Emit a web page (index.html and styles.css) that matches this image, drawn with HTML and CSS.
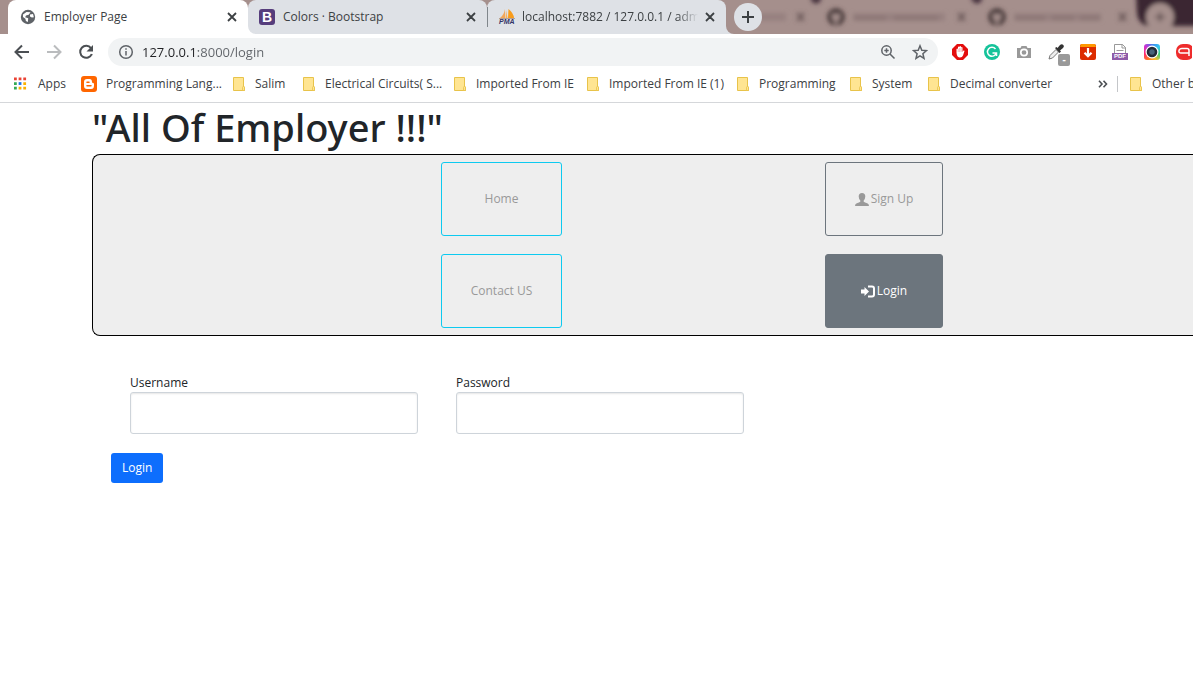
FILE: index.html
```html
<!DOCTYPE html>
<html lang="en">
<head>
<meta charset="utf-8">
<title>Employer Page</title>
<link rel="stylesheet" href="styles.css">
</head>
<body>
<svg class="defs" aria-hidden="true">
  <symbol id="close" viewBox="0 0 10 10"><path d="M1 1l8 8M9 1L1 9" stroke="currentColor" stroke-width="1.8" fill="none"/></symbol>
  <symbol id="folder" viewBox="0 0 13 14"><path d="M.5.5h10v9.5h1v3.500h-11z" fill="#ffe592" stroke="#e8c34a"/><path d="M9.500 13.500V10.500q0-1 1-1t1 1v3z" fill="#ffe592" stroke="#e8c34a" stroke-width=".8"/></symbol>
  <symbol id="github" viewBox="0 0 16 16"><circle cx="8" cy="8" r="8" fill="#4f4041"/><path d="M4.500 4.500l2 1h3l2-1v3.500q0 3-2.500 3v4H7v-4Q4.500 11 4.500 8z" fill="#a58f8c"/></symbol>
</svg>

<header class="browser">
  <div class="tabstrip">
    <div class="tab active">
      <svg class="favicon" viewBox="0 0 16 16"><circle cx="8" cy="8" r="7.200" fill="#5f6368"/><path d="M3 5.500L6.500 3l4 .2-1.800 2.600L6 6.500l-.8 1.800 3 .9-.3 3.800-2-1-.5-2.300L3 8z" fill="#fff"/><path d="M10 5.500l3-.6.8 3.300-2 .4-1.800-1z" fill="#fff"/></svg>
      <span class="tab-title">Employer Page</span>
      <button class="tab-close" aria-label="Close tab"><svg><use href="#close"/></svg></button>
    </div>
    <div class="tab">
      <span class="favicon bootstrap">B</span>
      <span class="tab-title">Colors · Bootstrap</span>
      <button class="tab-close" aria-label="Close tab"><svg><use href="#close"/></svg></button>
    </div>
    <div class="tab divided">
      <span class="favicon pma"><svg viewBox="0 0 16 10"><path d="M6 0v9H1q4-3 5-9z" fill="#f2a65a"/><path d="M9.500 0q5 4 5.500 9H9z" fill="#f89c1c"/><path d="M7 1l1.500 8H6.500z" fill="#f6b15e"/><path d="M0 9.500h16" stroke="#b8a090"/></svg><b>PMA</b></span>
      <span class="tab-title fade">localhost:7882 / 127.0.0.1 / admin</span>
      <button class="tab-close" aria-label="Close tab"><svg><use href="#close"/></svg></button>
    </div>
    <div class="strip-end">
      <button class="new-tab" aria-label="New tab"><svg viewBox="0 0 12 12"><path d="M6 0v12M0 6h12" stroke="#3c4043" stroke-width="2"/></svg></button>
      <svg class="backdrop" viewBox="0 0 467 34" preserveAspectRatio="xMinYMin slice" aria-hidden="true">
        <defs><filter id="soft" x="-10%" y="-50%" width="120%" height="200%"><feGaussianBlur stdDeviation="2"/></filter></defs>
        <rect width="467" height="34" fill="#a58f8c"/>
        <g filter="url(#soft)">
          <path d="M84-4h12l-2 6q-4 3-8 0zM244-4h13l-2 6q-4 3-8 0z" fill="#49343f"/>
          <path d="M410-6h70v32h-55q-12 0-14-12z" fill="#3b2833"/>
          <circle cx="434" cy="17" r="14" fill="#a58f8c"/>
          <path d="M434 12v10M429 17h10M71 13l7 8M78 13l-7 8M232 13l7 8M239 13l-7 8M393 13l7 8M400 13l-7 8" stroke="#6b5858" stroke-width="2.500"/>
          <path d="M20 17h40M127 17h92M288 17h87" stroke="#978180" stroke-width="8"/>
          <path d="M128 18h32M168 18h44M289 18h30M326 18h22M354 18h20" stroke="#8b7674" stroke-width="4"/>
        </g>
        <g filter="url(#soft)"><use href="#github" x="101" y="8" width="18" height="18"/><use href="#github" x="262" y="8" width="18" height="18"/></g>
      </svg>
    </div>
  </div>

  <div class="toolbar">
    <div class="nav-icons">
      <button aria-label="Back"><svg viewBox="0 0 16 16" fill="none" stroke="#4b4f53" stroke-width="2"><path d="M15 8H2M8 1.500L1.500 8 8 14.500"/></svg></button>
      <button aria-label="Forward"><svg viewBox="0 0 16 16" fill="none" stroke="#babcbe" stroke-width="2"><path d="M1 8h13M8 1.500L14.500 8 8 14.500"/></svg></button>
      <button aria-label="Reload"><svg viewBox="0 0 16 16"><path d="M13 4.200A6 6 0 1 0 13.800 10" fill="none" stroke="#4b4f53" stroke-width="2"/><path d="M15 1v6.500H8.500z" fill="#4b4f53"/></svg></button>
    </div>
    <div class="omnibox">
      <svg viewBox="0 0 16 16" fill="none" stroke="#5f6368" stroke-width="1.500"><circle cx="8" cy="8" r="6.300"/><path d="M8 7v4.500M8 4.200v1.600"/></svg>
      <input class="url" type="text" aria-label="Address" value="127.0.0.1:8000/login">
      <button aria-label="Zoom"><svg viewBox="0 0 16 16" fill="none" stroke="#5f6368" stroke-width="1.500"><circle cx="6.500" cy="6.500" r="4.700"/><path d="M10 10l4.500 4.500M6.500 4.300v4.400M4.300 6.500h4.400"/></svg></button>
      <button aria-label="Bookmark"><svg viewBox="0 0 16 16" fill="none" stroke="#5f6368" stroke-width="1.500"><path d="M8 1.800l1.800 4.400 4.700.4-3.600 3.100 1.100 4.600L8 11.800l-4 2.500 1.100-4.600L1.500 6.600l4.700-.4z"/></svg></button>
    </div>
    <div class="extensions">
      <svg viewBox="0 0 16 16"><path d="M5 0h6l5 5v6l-5 5H5l-5-5V5z" fill="#e40d0d"/><path d="M4.500 9V5q.8-.8 1.500 0V3q.7-.9 1.500 0V2.500q.7-.9 1.500 0V3.500q.8-.8 1.500 0V8l1-1.500q1-.4 1 .5L11 11.500q-.7 2-3 2-3 0-3.500-4.500z" fill="#fff"/><path d="M6.200 5v3M7.700 4v4M9.200 4v4" stroke="#e40d0d" stroke-width=".3"/></svg>
      <svg viewBox="0 0 16 16"><circle cx="8" cy="8" r="8" fill="#15c39a"/><path d="M11.500 5A4.500 4.500 0 1 0 12.300 9M8.500 9h4v3" fill="none" stroke="#fff" stroke-width="1.500"/></svg>
      <svg viewBox="0 0 16 16"><path d="M1 4h3.500l1-2h5l1 2H15v10H1z" fill="#999"/><circle cx="8" cy="8.500" r="3.200" fill="none" stroke="#fff" stroke-width="1.700"/></svg>
      <span class="picker"><svg viewBox="0 0 16 16"><path d="M1 15l1-3.500 6-6L10.500 8l-6 6z" fill="#eee" stroke="#777"/><path d="M7 4l1.500-1 1 1L12 1q2-1.500 3.300 0T15 4l-3 2.500 1 1L11.500 9z" fill="#333"/></svg><b>-</b></span>
      <svg viewBox="0 0 16 16"><rect width="16" height="16" rx="2" fill="#dd2c00"/><path d="M1 0h14l1 3H0z" fill="#ff9800"/><path d="M8 4v8M4.500 8.800L8 12.300l3.500-3.500" stroke="#fff" stroke-width="2.200" fill="none"/></svg>
      <span class="pdf"><svg viewBox="0 0 14 9"><path d="M1.500 9V.5h8l3 3V9" fill="#fff" stroke="#999"/><path d="M9 0v4h4M3.500 6.500h7" fill="none" stroke="#999"/></svg><b>PDF</b></span>
      <span class="lens"><svg viewBox="0 0 16 16"><circle cx="8" cy="8" r="6.500" fill="#fff"/><circle cx="8" cy="8" r="5.300" fill="#222b38"/><circle cx="8" cy="8" r="2.700" fill="#47637a"/></svg></span>
      <svg viewBox="0 0 16 16"><rect width="18" height="16" rx="7" fill="#ee2c2c"/><path d="M13 9H5q-2.500 0-2-2.500Q3.500 4.500 6 4.500h5q2 0 2 2V12" fill="none" stroke="#fff" stroke-width="1.500"/></svg>
    </div>
  </div>

  <nav class="bookmarks" aria-label="Bookmarks">
    <a href="#"><svg viewBox="0 0 14 14"><path d="M0 0h3v3H0zM5 0h3v3H5zM10 0h3v3h-3z" fill="#ea4335"/><path d="M0 5h3v3H0zM0 10h3v3H0z" fill="#34a853"/><path d="M5 5h3v3H5z" fill="#1a73e8"/><path d="M10 5h3v3h-3zM5 10h3v3H5zM10 10h3v3h-3z" fill="#fbb100"/></svg>Apps</a>
    <a href="#"><svg class="blogger" viewBox="0 0 16 16"><rect width="16" height="16" rx="3" fill="#f60"/><path d="M6 3h2.500Q11 3 11 6q0 1 1 1t1 1v2q0 3-3 3H6q-3 0-3-3V6q0-3 3-3z" fill="#fff"/><path d="M6 6.200h2M6 9.800h4" stroke="#f60" stroke-width="1.500" stroke-linecap="round"/></svg>Programming Lang...</a>
    <a href="#"><svg><use href="#folder"/></svg>Salim</a>
    <a href="#"><svg><use href="#folder"/></svg>Electrical Circuits( S...</a>
    <a href="#"><svg><use href="#folder"/></svg>Imported From IE</a>
    <a href="#"><svg><use href="#folder"/></svg>Imported From IE (1)</a>
    <a href="#"><svg><use href="#folder"/></svg>Programming</a>
    <a href="#"><svg><use href="#folder"/></svg>System</a>
    <a href="#"><svg><use href="#folder"/></svg>Decimal converter</a>
    <button class="more" aria-label="More bookmarks"><svg viewBox="0 0 10 8"><path d="M1 .8L4 4 1 7.200M5.500.8l3 3.200-3 3.200" fill="none" stroke="#4b4f53" stroke-width="1.600"/></svg></button>
    <a class="other" href="#"><svg><use href="#folder"/></svg>Other bookmarks</a>
  </nav>
</header>

<main class="page">
  <h1>"All Of Employer !!!"</h1>
  <nav class="panel" aria-label="Main">
    <a class="card home" href="#">Home</a>
    <a class="card account" href="#"><svg viewBox="0 0 14 13"><path d="M7 0q3.300 0 3.300 3.500Q10.200 6 8.700 7.500v1.300q1 .8 3.500 1.400Q14 10.700 14 13H0q0-2.300 1.800-2.800 2.500-.6 3.500-1.400V7.500Q3.800 6 3.700 3.500 3.700 0 7 0z" fill="currentColor"/></svg>Sign Up</a>
    <a class="card home" href="#">Contact US</a>
    <a class="card account current" href="#"><svg viewBox="0 0 14 12"><path d="M0 4h3.500V1.500L8 6l-4.500 4.500V8H0z" fill="currentColor"/><path d="M7 1h4q2 0 2 2v6q0 2-2 2H7" fill="none" stroke="currentColor" stroke-width="2"/></svg>Login</a>
  </nav>
  <form class="login">
    <div class="fields">
      <div class="field"><label for="username">Username</label><input id="username" type="text"></div>
      <div class="field"><label for="password">Password</label><input id="password" type="password"></div>
    </div>
    <button class="submit" type="button">Login</button>
  </form>
</main>
</body>
</html>
```
FILE: styles.css
```css
* { box-sizing: border-box; }
body {
  margin: 0;
  background: #fff;
  color: #212529;
  font: 12px/18px "Open Sans", "Noto Sans", sans-serif;
  overflow-x: hidden;
}
button { padding: 0; border: 0; background: none; font: inherit; color: inherit; }
a { color: inherit; text-decoration: none; }
svg { display: block; flex: none; }
.defs { position: absolute; width: 0; height: 0; }

.browser { border-bottom: 1px solid #d5d7da; color: #3c4043; overflow: hidden; }
.tabstrip {
  display: flex;
  height: 34px;
  border-left: 8px solid #a58f8c;
  background: linear-gradient(#a58f8c 50%, #fff 50%);
}
.tab {
  flex: none;
  display: flex;
  align-items: center;
  gap: 8px;
  width: 239px;
  padding: 0 11px;
  border-radius: 8px 8px 0 0;
  background: #dee1e6;
}
.tab.active { width: 240px; padding-left: 12px; background: #fff; }
.tab.active + .tab { border-bottom-left-radius: 8px; }
.tab.divided { position: relative; gap: 7px; padding-left: 12px; }
.tab.divided::before { content: ""; position: absolute; left: 0; top: 7px; width: 1px; height: 20px; background: #80868b; }
.favicon { flex: none; width: 16px; height: 16px; }
.bootstrap { border-radius: 3px; background: #563d7c; color: #fff; font: bold 14px/16px "Liberation Sans", sans-serif; text-align: center; }
.pma svg { width: 16px; height: 10px; }
.pma b { display: block; font: italic bold 7px/6px "Liberation Sans", sans-serif; color: #333366; }
.tab-title { flex: 1; overflow: hidden; white-space: nowrap; }
.fade { mask-image: linear-gradient(to right, #000 88%, transparent); }
.tab-close svg { width: 10px; height: 10px; }
.strip-end { position: relative; flex: 1; min-width: 0; background: #dee1e6; }
.backdrop { width: 100%; height: 34px; border-bottom-left-radius: 8px; }
.new-tab {
  position: absolute;
  left: 8px;
  top: 3px;
  display: grid;
  place-items: center;
  width: 28px;
  height: 28px;
  border-radius: 50%;
  background: #dee1e6;
}
.new-tab svg { width: 12px; height: 12px; }

.toolbar { display: flex; align-items: center; height: 36px; padding-left: 14px; }
.nav-icons { display: flex; gap: 16px; width: 94px; }
.nav-icons svg { width: 16px; height: 16px; }
.omnibox {
  flex: 1;
  display: flex;
  align-items: center;
  gap: 16px;
  height: 28px;
  padding: 0 10px;
  border-radius: 14px;
  background: #f1f3f4;
}
.omnibox svg { width: 16px; height: 16px; }
.url {
  flex: 1;
  min-width: 0;
  margin-left: -8px;
  padding: 0;
  border: 0;
  outline: 0;
  font: 13px/20px "Open Sans", "Noto Sans", sans-serif;
  color: #202124;
  background: linear-gradient(to right, #202124 56px, #5f6368 56px) text;
  -webkit-text-fill-color: transparent;
}
.extensions { display: flex; gap: 16px; width: 255px; padding-left: 14px; }
.extensions > * { flex: none; width: 16px; height: 16px; }
.picker { position: relative; }
.picker b {
  position: absolute;
  left: 10px;
  top: 10px;
  width: 12px;
  height: 12px;
  border-radius: 2px;
  background: #999;
  color: #fff;
  font-size: 10px;
  line-height: 10px;
  text-align: center;
}
.pdf svg { width: 14px; height: 9px; margin: auto; }
.pdf b { display: block; background: #8e5aa8; color: #fff; font: bold 6px/7px "Liberation Sans", sans-serif; text-align: center; }
.lens { border-radius: 3px; background: conic-gradient(#3f7ff0, #35c7f0, #38d080, #f8c030, #ff7a20, #ff2a70, #d030d0, #3f7ff0); }

.bookmarks {
  display: grid;
  grid-template-columns: 67px 152px 70px 151px 133px 150px 113px 78px 146px 1fr 76px;
  align-items: center;
  height: 32px;
  padding: 0 0 4px 14px;
  white-space: nowrap;
}
.bookmarks a { display: flex; align-items: center; gap: 9px; }
.bookmarks svg { width: 13px; height: 14px; }
.bookmarks a:first-child { gap: 11px; }
.bookmarks .blogger { width: 16px; height: 16px; }
.bookmarks .more { justify-self: end; margin-right: 9px; }
.bookmarks .more svg { width: 10px; height: 8px; }
.bookmarks .other { height: 16px; padding-left: 12px; border-left: 1px solid #c4c6c9; }

.page { padding-left: 92px; }
h1 { margin: 0 0 3px; font: 500 38px/48px "Noto Sans", "Open Sans", sans-serif; }
.panel {
  display: grid;
  grid-template-columns: 348fr 121px 263fr 118px 250fr;
  row-gap: 18px;
  padding: 7px 0;
  border: 1px solid #000;
  border-right: 0;
  border-radius: 8px 0 0 8px;
  background: #eee;
}
.card {
  display: flex;
  align-items: center;
  justify-content: center;
  gap: 2px;
  height: 74px;
  border: 1px solid #0dcaf0;
  border-radius: 3px;
  color: #999;
}
.card.home { grid-column: 2; }
.card.account { grid-column: 4; border-color: #6c757d; }
.card.current { background: #6c757d; color: #fff; }
.card svg { width: 14px; height: 13px; }
.login { padding: 38px 19px 0; }
.fields { display: flex; flex-wrap: wrap; gap: 38px; padding-left: 19px; }
.field { flex: 0 1 288px; }
.field label { display: block; }
.field input {
  display: block;
  width: 100%;
  height: 42px;
  padding: 8px 12px;
  border: 1px solid #ced4da;
  border-radius: 3px;
  background: #fff;
  font: inherit;
  box-shadow: inset 0 1px 2px rgba(0, 0, 0, 0.1);
}
.submit { margin-top: 19px; padding: 6px 11px; border-radius: 3px; background: #0d6efd; color: #fff; }
```
